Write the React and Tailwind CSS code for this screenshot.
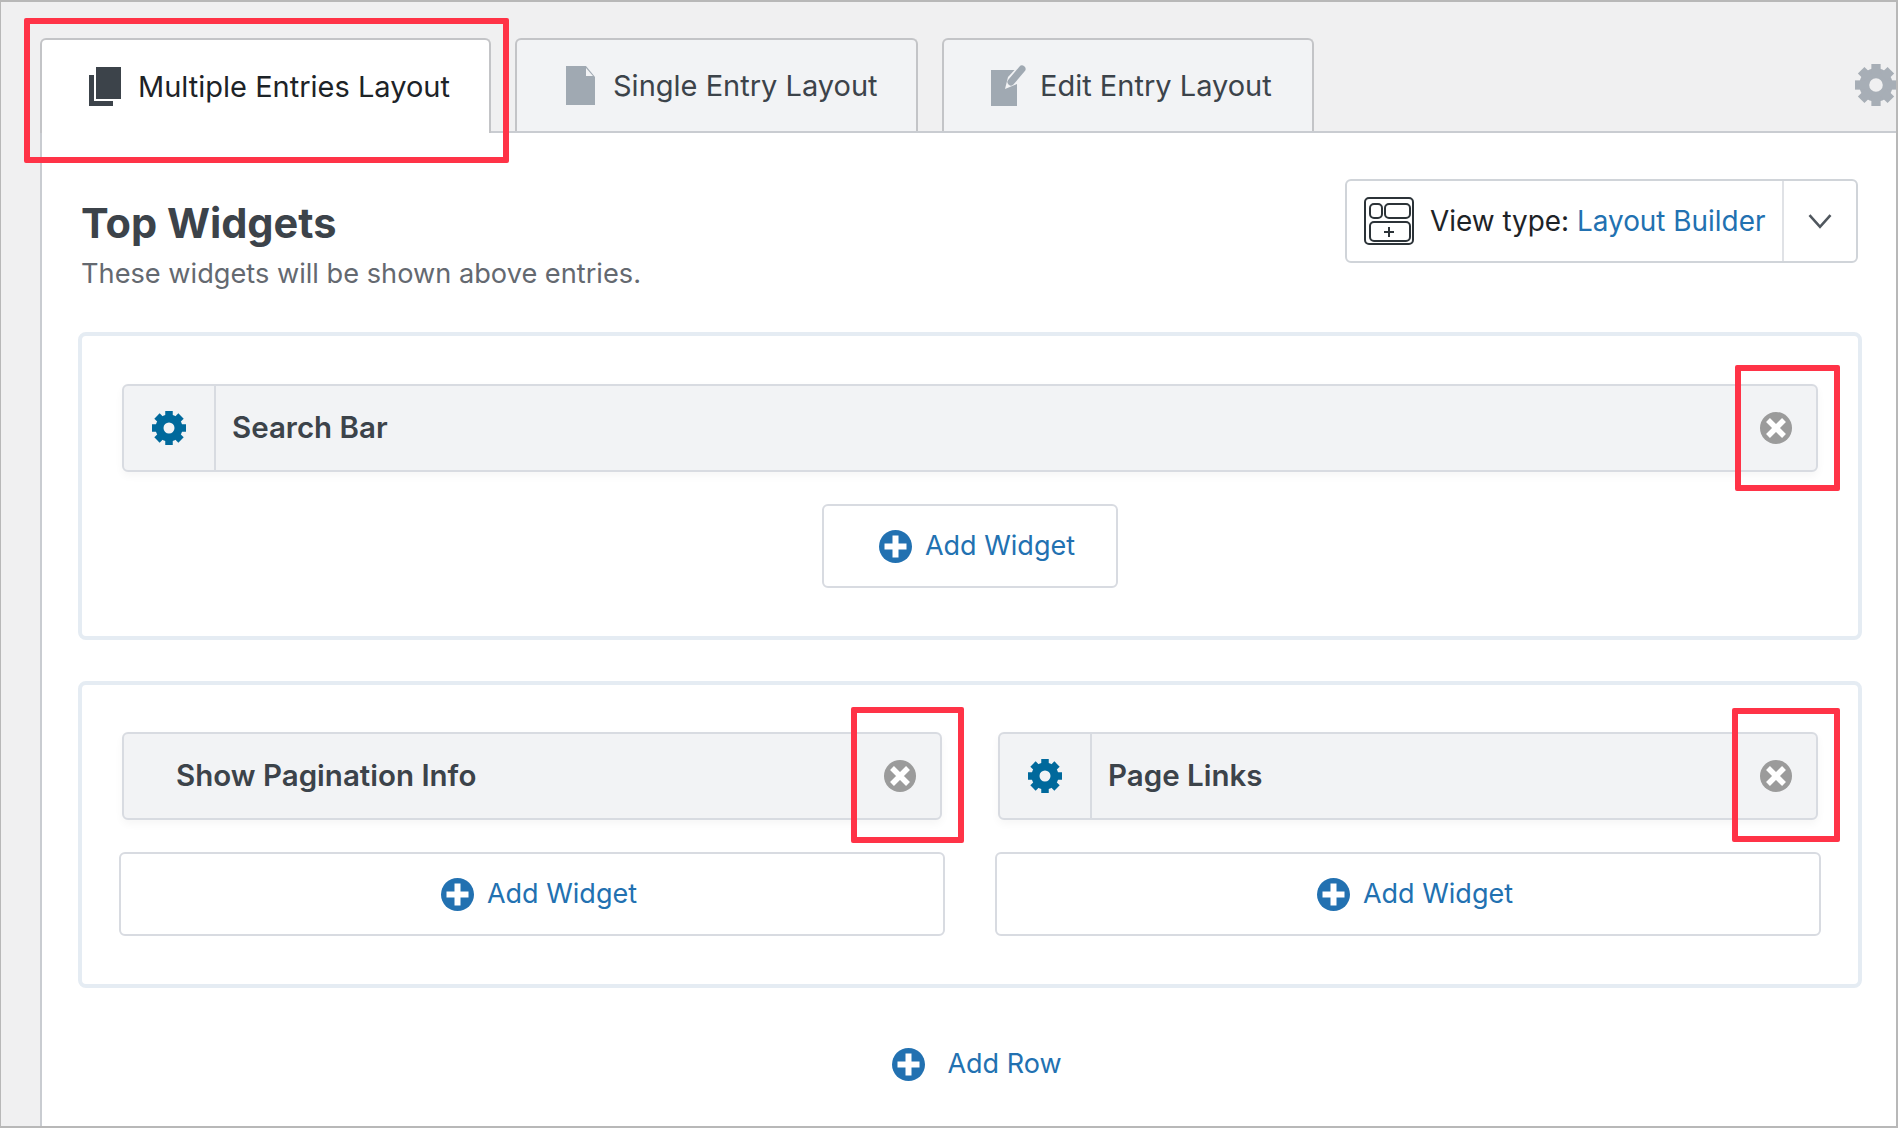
import React from 'react';

const Cog = ({ className }) => (
  <svg viewBox="0 0 34 34" className={className} fill="currentColor">
    <circle cx="17" cy="17" r="9.5" fill="none" stroke="currentColor" strokeWidth="8" />
    {[0, 45, 90, 135, 180, 225, 270, 315].map((a) => (
      <rect key={a} x="13.25" y="0" width="7.5" height="8" transform={`rotate(${a} 17 17)`} />
    ))}
  </svg>
);

const PlusCircle = () => (
  <svg viewBox="0 0 33 33" className="w-[33px] h-[33px] shrink-0">
    <circle cx="16.5" cy="16.5" r="16.5" fill="#2271b1" />
    <path d="M13.5 5.5h6v8h8v6h-8v8h-6v-8h-8v-6h8z" fill="#fff" />
  </svg>
);

const CloseCircle = () => (
  <svg viewBox="0 0 32 32" className="w-8 h-8 shrink-0">
    <circle cx="16" cy="16" r="16" fill="#9b9b9b" />
    <path d="M8 8 24 24M24 8 8 24" stroke="#fff" strokeWidth="5.5" />
  </svg>
);

const Widget = ({ label, gear = true }) => (
  <div className="flex items-center h-[88px] rounded-md border-2 border-[#d8dbe1] bg-[#f2f3f5] shadow-[0_4px_8px_rgba(0,0,0,0.04)]">
    {gear && (
      <div className="flex items-center justify-center w-[92px] h-full border-r-2 border-[#d8dbe1] text-[#00699c]">
        <Cog className="w-[34px] h-[34px]" />
      </div>
    )}
    <div className={`flex-1 pb-[2px] text-[29.5px] font-semibold text-[#3c434a] ${gear ? 'pl-[16px]' : 'pl-[52px]'}`}>{label}</div>
    <div className="w-[84px] flex justify-center pl-[3px]">
      <CloseCircle />
    </div>
  </div>
);

const AddWidget = ({ className }) => (
  <div className={`flex items-center justify-center gap-[13px] h-[84px] pl-[14px] bg-white rounded-md border-2 border-[#d8dbe1] ${className}`}>
    <PlusCircle />
    <span className="text-[27px] text-[#2271b1]">Add Widget</span>
  </div>
);

const App = () => {
  return (
    <div className="relative flex flex-col w-[1898px] h-[1128px] overflow-hidden bg-[#f0f0f1] border-t-2 border-b-2 border-l border-r-2 border-[#b8b8b8] font-['Inter',sans-serif]">
      {/* tabs */}
      <div className="relative flex items-end h-[131px] pl-[39px] shrink-0">
        <div className="flex items-center gap-[17px] w-[451px] h-[95px] pl-[47px] bg-white rounded-t-md border-2 border-b-0 border-[#c3c4c7] text-[#1d2327] text-[29px]">
          <svg viewBox="0 0 32 39" className="w-8 h-[39px] shrink-0" fill="#3c434a">
            <path d="M7 0h25v32H7z" />
            <path d="M0 8h5v26h19v5H0z" />
          </svg>
          Multiple Entries Layout
        </div>
        <div className="flex-1 flex items-end gap-6 h-full pl-6 border-b-2 border-[#c9ccd1]">
          <div className="flex items-center gap-[18px] w-[403px] h-[93px] pl-[49px] bg-[#f2f3f5] rounded-t-md border-2 border-b-0 border-[#c3c4c7] text-[#3c434a] text-[29px]">
            <svg viewBox="0 0 29 39" className="w-[29px] h-[39px] shrink-0" fill="#a0a9b2">
              <path d="M0 0h20l9 11v28H0z" />
              <path d="M20 2v8h7z" fill="#f2f3f5" />
            </svg>
            Single Entry Layout
          </div>
          <div className="flex items-center gap-[13px] w-[372px] h-[93px] pl-[47px] bg-[#f2f3f5] rounded-t-md border-2 border-b-0 border-[#c3c4c7] text-[#3c434a] text-[29px]">
            <svg viewBox="0 0 36 41" className="w-9 h-[41px] shrink-0 overflow-visible" fill="#a0a9b2">
              <path d="M0 5h26v36H0z" />
              <path d="M14 24l3-12L30-2l9 8-13 13z" fill="#f2f3f5" />
              <path d="M20 17 31 4" fill="none" stroke="#a0a9b2" strokeWidth="7" strokeLinecap="round" />
            </svg>
            Edit Entry Layout
          </div>
        </div>
        <Cog className="absolute right-[-1px] top-[62px] w-[42px] h-[42px] text-[#a7aeb6]" />
      </div>

      {/* body */}
      <div className="flex-1 ml-[39px] pt-[46px] pl-[36px] pr-[34px] bg-white border-l-2 border-[#c9ccd1]">
        <div className="flex justify-between items-start h-[153px] pl-[3px] pr-1">
          <div className="pt-[15px]">
            <h2 className="text-[41.5px] leading-[58px] font-bold text-[#3c434a]">Top Widgets</h2>
            <p className="text-[27.2px] leading-[30px] mt-[7px] text-[#646970]">These widgets will be shown above entries.</p>
          </div>
          <div className="flex items-center w-[513px] h-[84px] rounded-md border-2 border-[#d0d4d9]">
            <div className="flex items-center gap-4 flex-1 h-full pl-[17px] border-r-2 border-[#e0e2e6] text-[27.9px]">
              <svg viewBox="0 0 50 48" className="w-[50px] h-[48px] shrink-0" fill="none" stroke="#2c3338" strokeWidth="2">
                <rect x="1" y="1" width="48" height="46" rx="4" />
                <rect x="6" y="7" width="12" height="14" rx="4" />
                <rect x="21" y="7" width="25" height="14" rx="4" />
                <rect x="6" y="25" width="40" height="19" rx="4" />
                <path d="M25 30v10M20 35h10" />
              </svg>
              <span className="pt-[1px] text-[#1d2327]">View type: <span className="text-[#2271b1]">Layout Builder</span></span>
            </div>
            <div className="flex items-center justify-center w-[72px] text-[#50575e]">
              <svg viewBox="0 0 24 24" className="w-[28px] h-[28px]" fill="none" stroke="currentColor" strokeWidth="2.2">
                <path d="M3 7l9 10 9-10" />
              </svg>
            </div>
          </div>
        </div>

        <div className="flex flex-col gap-[41px]">
          <section className="h-[308px] px-10 pt-12 rounded-lg border-4 border-[#e5ecf3]">
            <Widget label="Search Bar" />
            <AddWidget className="w-[296px] mx-auto mt-8" />
          </section>

          <section className="grid grid-cols-2 content-start gap-x-14 h-[307px] px-10 pt-[47px] rounded-lg border-4 border-[#e5ecf3]">
            <Widget label="Show Pagination Info" gear={false} />
            <Widget label="Page Links" />
            <AddWidget className="-mx-[3px] mt-8" />
            <AddWidget className="-mx-[3px] mt-8" />
          </section>
        </div>

        <div className="flex items-center justify-center gap-[22px] mt-[56px] pl-[14px] text-[27px] text-[#2271b1]">
          <PlusCircle />
          Add Row
        </div>
      </div>

      {/* red annotation boxes */}
      <div className="absolute left-[23px] top-[16px] w-[485px] h-[145px] border-[6px] border-[#ff3347] rounded-[2px]" />
      <div className="absolute left-[1734px] top-[363px] w-[105px] h-[126px] border-[6px] border-[#ff3347] rounded-[2px]" />
      <div className="absolute left-[850px] top-[705px] w-[113px] h-[136px] border-[6px] border-[#ff3347] rounded-[2px]" />
      <div className="absolute left-[1731px] top-[706px] w-[108px] h-[134px] border-[6px] border-[#ff3347] rounded-[2px]" />
    </div>
  );
};

export default App;
